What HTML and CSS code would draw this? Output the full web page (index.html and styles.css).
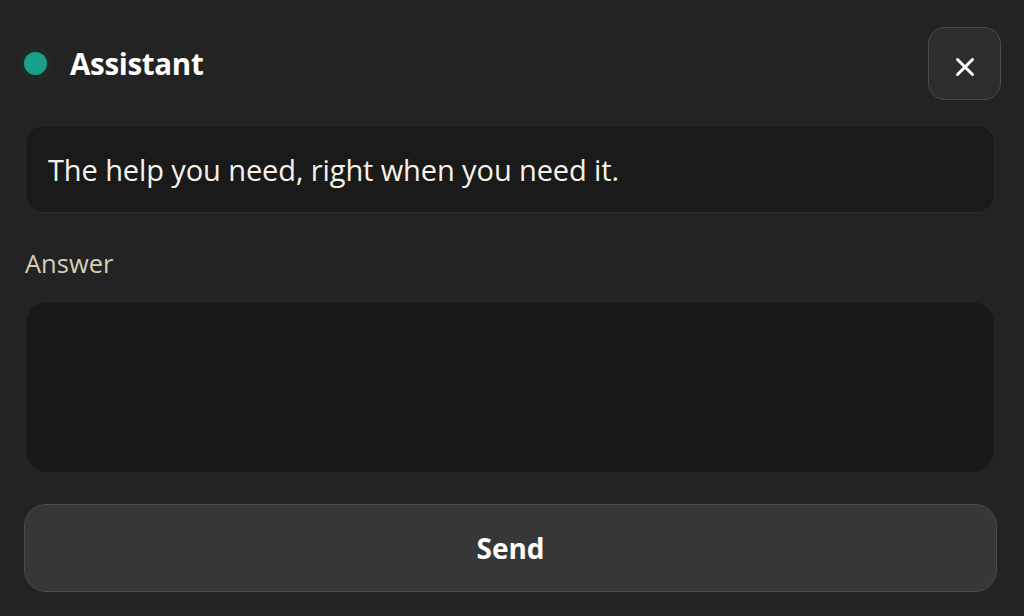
FILE: index.html
```html
<!DOCTYPE html>
<html lang="en">
<head>
<meta charset="utf-8">
<title>Assistant</title>
<link rel="stylesheet" href="styles.css">
</head>
<body>
<div class="panel">
  <header class="header">
    <div class="title-wrap">
      <span class="status-dot"></span>
      <h1 class="title">Assistant</h1>
    </div>
    <button class="close-btn" aria-label="Close">
      <svg class="close-icon" width="20" height="20" viewBox="0 0 20 20" fill="none" stroke="#ffffff" stroke-width="3" stroke-linecap="round">
        <path d="M2.5 2.5 L17.5 17.5 M17.5 2.5 L2.5 17.5"/>
      </svg>
    </button>
  </header>
  <div class="prompt">The help you need, right when you need it.</div>
  <label class="label" for="answer">Answer</label>
  <textarea id="answer" class="answer"></textarea>
  <button class="send-btn">Send</button>
</div>
</body>
</html>
```
FILE: styles.css
```css
* { box-sizing: border-box; }
html, body {
  margin: 0;
  height: 100%;
  background: #232323;
}
body {
  font-family: "Open Sans", "Noto Sans", sans-serif;
  color: #ffffff;
}
.panel {
  display: flex;
  flex-direction: column;
  padding: 27px 29px 0 25px;
}
.header {
  display: flex;
  align-items: center;
  justify-content: space-between;
  margin-right: -6px;
  height: 73px;
}
.title-wrap {
  display: flex;
  align-items: center;
  gap: 23px;
  margin-left: -1px;
  margin-top: -1px;
}
.status-dot {
  width: 23px;
  height: 23px;
  border-radius: 50%;
  background: #18a08a;
  box-shadow: 0 0 0 6px #1f2a28;
}
.title {
  margin: 0;
  font-size: 29.5px;
  font-weight: 700;
  letter-spacing: -0.3px;
  color: #ffffff;
}
.close-btn {
  width: 73px;
  height: 73px;
  border-radius: 17px;
  background: #2d2d2d;
  border: 1px solid #4a4a4a;
  display: flex;
  align-items: center;
  justify-content: center;
  padding: 7px 0 0 1px;
}
.prompt {
  margin-top: 25px;
  height: 88px;
  border-radius: 18px;
  background: #1a1a1a;
  border: 1px solid #2b2b2b;
  padding: 0 22px;
  display: flex;
  align-items: center;
  font-size: 29px;
  letter-spacing: -0.1px;
  color: #f5f3ea;
}
.label {
  margin-top: 33px;
  font-size: 25.5px;
  color: #d6cfb6;
  line-height: 34px;
}
.answer {
  margin-top: 21px;
  height: 172px;
  border-radius: 22px;
  background: #191919;
  border: 1px solid #272727;
  resize: none;
  outline: none;
}
.send-btn {
  margin-top: 31px;
  margin-left: -1px;
  margin-right: -2px;
  height: 88px;
  border-radius: 22px;
  background: #373737;
  border: 1px solid #4a4a4a;
  color: #ffffff;
  font-family: inherit;
  font-size: 28px;
  font-weight: 700;
}
```
